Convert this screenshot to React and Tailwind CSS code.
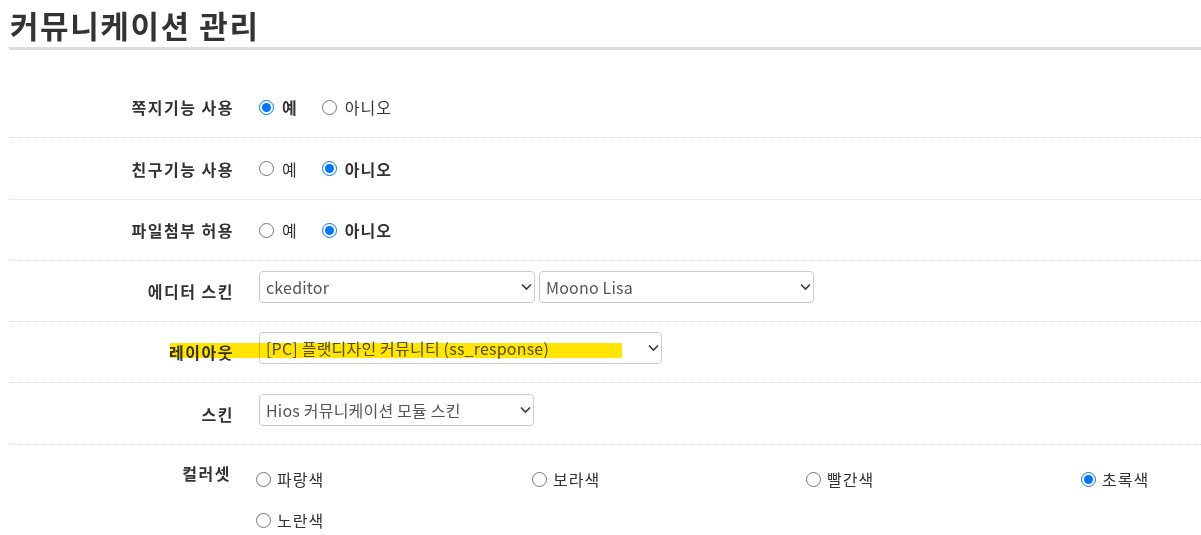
import React from 'react';

const Chevron = () => (
  <svg className="absolute right-[3px] top-1/2 -translate-y-1/2 pointer-events-none" width="11" height="7" viewBox="0 0 11 7" fill="none">
    <path d="M1 1 L5.5 5.5 L10 1" stroke="#3c3c3c" strokeWidth="1.7" />
  </svg>
);

const Select = ({ width, value }) => (
  <div className={`relative ${width}`}>
    <select
      defaultValue={value}
      className="appearance-none w-full h-[32px] border border-[#cccccc] rounded-[4px] bg-white pl-[6px] pr-6 text-[16px] tracking-[0.2px] text-[#555] outline-none"
    >
      <option>{value}</option>
    </select>
    <Chevron />
  </div>
);

const Radio = ({ name, label, checked }) => (
  <label className="flex items-center mr-[24px]">
    <input type="radio" name={name} defaultChecked={checked} className="m-0 w-[15px] h-[15px]" />
    <span className={`ml-[8px] text-[16px] tracking-[1px] ${checked ? 'font-bold' : ''}`}>{label}</span>
  </label>
);

const Row = ({ label, children, extra, select, tall }) => (
  <div className={`relative flex items-center ${tall ? 'h-[62px]' : 'h-[61px]'} border-b border-dotted border-[#d9d9d9]`}>
    <div className="w-[225px] text-right text-[16px] tracking-[1.5px] font-bold text-[#333]">{label}</div>
    <div className={`ml-[25px] flex items-center ${select ? 'mb-[8px]' : ''}`}>{children}</div>
    {extra}
  </div>
);

export default function App() {
  const colors = [
    { label: '파랑색', checked: false },
    { label: '보라색', checked: false },
    { label: '빨간색', checked: false },
    { label: '초록색', checked: true },
    { label: '노란색', checked: false },
  ];

  return (
    <div className="min-h-screen bg-white pl-[9px] text-[#333] font-['Noto_Sans_CJK_KR',_'Noto_Sans',_sans-serif] overflow-hidden">
      <h1 className="pt-[7px] pb-[4px] pl-px text-[31px] tracking-[1.6px] leading-[36px] font-bold text-[#333] border-b-[3px] border-[#dddddd]">
        커뮤니케이션 관리
      </h1>

      <div className="mt-[27px]">
        <Row label="쪽지기능 사용">
          <Radio name="msg" label="예" checked />
          <Radio name="msg" label="아니오" />
        </Row>
        <Row label="친구기능 사용" tall>
          <Radio name="friend" label="예" />
          <Radio name="friend" label="아니오" checked />
        </Row>
        <Row label="파일첨부 허용">
          <Radio name="file" label="예" />
          <Radio name="file" label="아니오" checked />
        </Row>
        <Row label="에디터 스킨" select>
          <div className="flex gap-[4px]">
            <Select width="w-[276px]" value="ckeditor" />
            <Select width="w-[275px]" value="Moono Lisa" />
          </div>
        </Row>
        <Row
          label="레이아웃"
          select
          extra={
            <div className="absolute left-[161px] top-[21px] w-[452px] h-[15px] bg-[#ffe500] mix-blend-multiply pointer-events-none" />
          }
        >
          <Select width="w-[403px]" value="[PC] 플랫디자인 커뮤니티 (ss_response)" />
        </Row>
        <Row label="스킨" select tall>
          <Select width="w-[275px]" value="Hios 커뮤니케이션 모듈 스킨" />
        </Row>

        <div className="flex items-start pt-[14px]">
          <div className="w-[225px] pt-[3px] text-right text-[16px] tracking-[1.5px] leading-[22px] font-bold">컬러셋</div>
          <div className="ml-[25px] grid grid-cols-[276px_274px_275px_120px]">
            {colors.map((c) => (
              <div key={c.label} className="h-[41px] flex items-start pt-[8px]">
                <label className="flex items-center">
                  <input type="radio" name="color" defaultChecked={c.checked} className="m-0 w-[15px] h-[15px]" />
                  <span className="ml-[6px] text-[16px] tracking-[1px]">{c.label}</span>
                </label>
              </div>
            ))}
          </div>
        </div>
      </div>
    </div>
  );
}
